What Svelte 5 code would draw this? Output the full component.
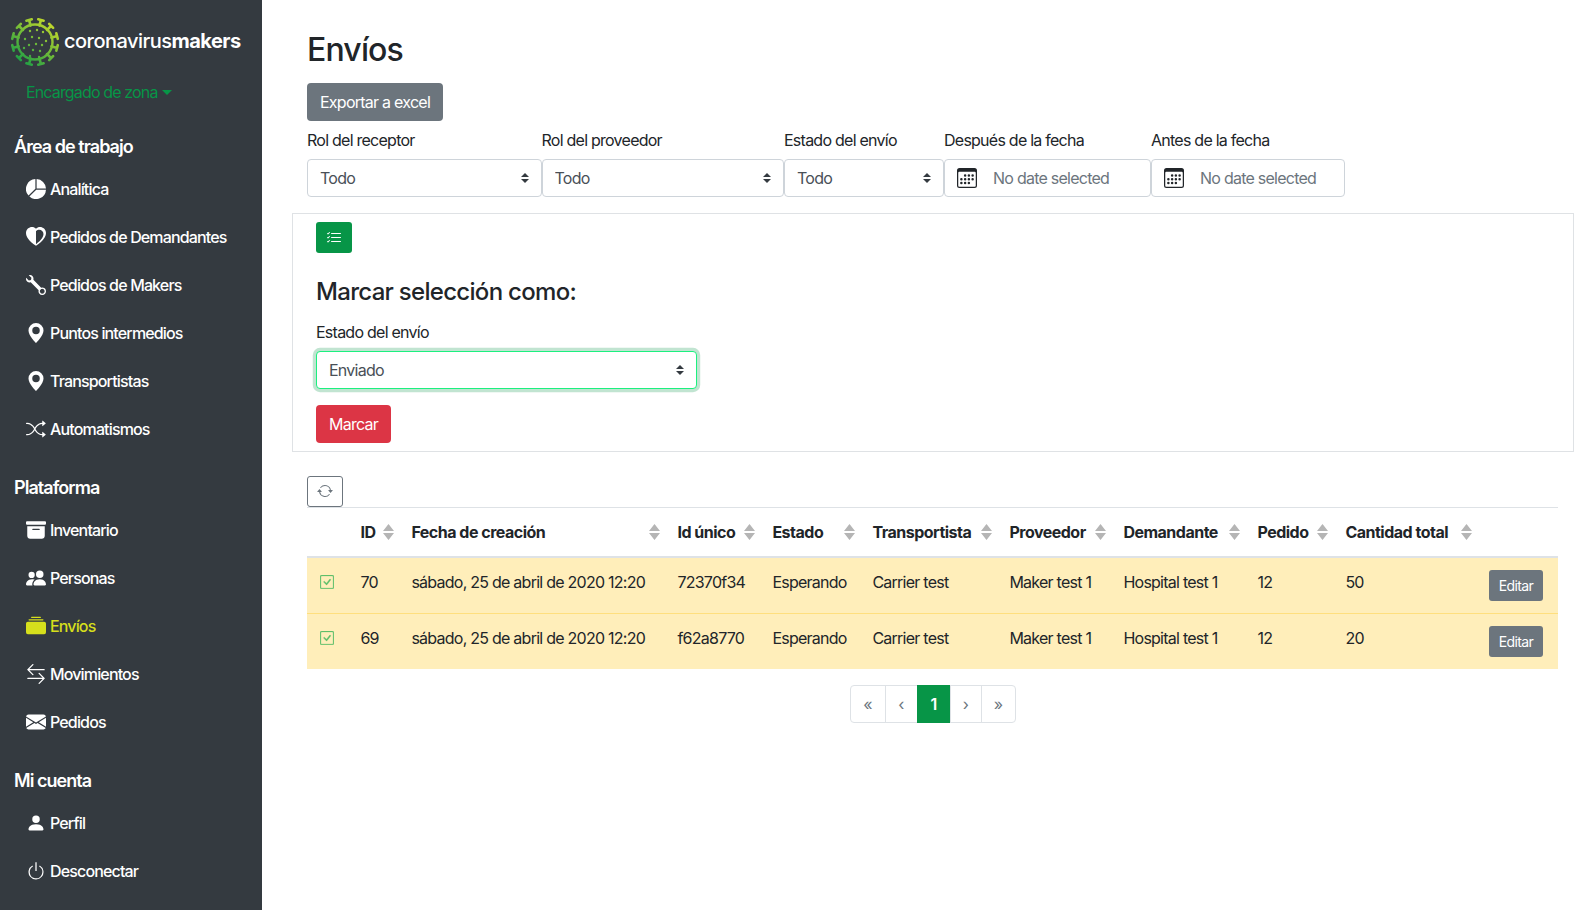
<script>
  const icons = {
    pie: 'M15.985 8.5H8.207l-5.5 5.5a8 8 0 0 0 13.277-5.5zM2 13.292A8 8 0 0 1 7.5.015v7.778l-5.5 5.5zM8.5.015V7.5h7.485A8.001 8.001 0 0 0 8.5.015z',
    heart: 'M8 1.314C3.562-3.248-7.534 4.736 8 15zM8 1.314C12.438-3.248 23.534 4.736 8 15zM8 3.300C11.500-0.400 19.500 5.500 8 13.700z',
    wrench: 'M.102 2.223A3.004 3.004 0 0 0 3.78 5.897l6.341 6.252A3.003 3.003 0 0 0 13 16a3 3 0 1 0-.851-5.878L5.897 3.781A3.004 3.004 0 0 0 2.223.1l2.141 2.142L4 4l-1.757.364L.102 2.223zm13.37 9.019.528.026.287.445.445.287.026.529L15 13l-.242.471-.026.529-.445.287-.287.445-.529.026L13 15l-.471-.242-.529-.026-.287-.445-.445-.287-.026-.529L11 13l.242-.471.026-.529.445-.287.287-.445.529-.026L13 11l.471.242z',
    geo: 'M8 16s6-5.686 6-10A6 6 0 0 0 2 6c0 4.314 6 10 6 10zm0-7a3 3 0 1 1 0-6 3 3 0 0 1 0 6z',
    shuffle: 'M0 3.5A.5.5 0 0 1 .5 3H1c2.202 0 3.827 1.24 4.874 2.418.49.552.865 1.102 1.126 1.532.26-.43.636-.98 1.126-1.532C9.173 4.24 10.798 3 13 3v1c-1.798 0-3.173 1.01-4.126 2.082A9.624 9.624 0 0 0 7.556 8a9.624 9.624 0 0 0 1.317 1.918C9.828 10.99 11.204 12 13 12v1c-2.202 0-3.827-1.24-4.874-2.418A10.595 10.595 0 0 1 7 9.05c-.26.43-.636.98-1.126 1.532C4.827 11.76 3.202 13 1 13H.5a.5.5 0 0 1 0-1H1c1.798 0 3.173-1.01 4.126-2.082A9.624 9.624 0 0 0 6.444 8a9.624 9.624 0 0 0-1.317-1.918C4.172 5.01 2.796 4 1 4H.5a.5.5 0 0 1-.5-.5zM13 5.466V1.534a.25.25 0 0 1 .41-.192l2.36 1.966c.12.1.12.284 0 .384l-2.36 1.966a.25.25 0 0 1-.41-.192zm0 9v-3.932a.25.25 0 0 1 .41-.192l2.36 1.966c.12.1.12.284 0 .384l-2.36 1.966a.25.25 0 0 1-.41-.192z',
    archive: 'M12.643 15C13.979 15 15 13.845 15 12.5V5H1v7.5C1 13.845 2.021 15 3.357 15h9.286zM5.500 7h5a.5.5 0 0 1 0 1h-5a.5.5 0 0 1 0-1zM.8 1a.8.8 0 0 0-.8.8V3a.8.8 0 0 0 .8.8h14.4A.8.8 0 0 0 16 3V1.800a.8.8 0 0 0-.8-.8H.8z',
    people: 'M7 14s-1 0-1-1 1-4 5-4 5 3 5 4-1 1-1 1H7zm4-6a3 3 0 1 0 0-6 3 3 0 0 0 0 6zM5.216 14A2.238 2.238 0 0 1 5 13c0-1.355.68-2.75 1.936-3.72A6.325 6.325 0 0 0 5 9c-4 0-5 3-5 4s1 1 1 1h4.216zM4.500 8a2.500 2.500 0 1 0 0-5 2.500 2.500 0 0 0 0 5z',
    collection: 'M0 13a1.500 1.500 0 0 0 1.500 1.500h13A1.500 1.500 0 0 0 16 13V6a1.500 1.500 0 0 0-1.500-1.500h-13A1.500 1.500 0 0 0 0 6v7zM2 3a.5.5 0 0 0 .5.5h11a.5.5 0 0 0 0-1h-11A.5.5 0 0 0 2 3zm2-2a.5.5 0 0 0 .5.5h7a.5.5 0 0 0 0-1h-7A.5.5 0 0 0 4 1z',
    arrows: 'M1 11.500a.5.5 0 0 0 .5.5h11.793l-3.147 3.146a.5.5 0 0 0 .708.708l4-4a.5.5 0 0 0 0-.708l-4-4a.5.5 0 0 0-.708.708L13.293 11H1.500a.5.5 0 0 0-.5.5zm14-7a.5.5 0 0 1-.5.5H2.707l3.147 3.146a.5.5 0 1 1-.708.708l-4-4a.5.5 0 0 1 0-.708l4-4a.5.5 0 1 1 .708.708L2.707 4H14.500a.5.5 0 0 1 .5.5z',
    envelope: 'M.05 3.555A2 2 0 0 1 2 2h12a2 2 0 0 1 1.950 1.555L8 8.414.05 3.555zM0 4.697v7.104l5.803-3.558L0 4.697zM6.761 8.830l-6.570 4.027A2 2 0 0 0 2 14h12a2 2 0 0 0 1.808-1.144l-6.570-4.027L8 9.586l-1.239-.757zm3.436-.586L16 11.801V4.697l-5.803 3.546z',
    person: 'M3 14s-1 0-1-1 1-4 6-4 6 3 6 4-1 1-1 1H3zm5-6a3 3 0 1 0 0-6 3 3 0 0 0 0 6z',
    power: 'M7.500 1v7h1V1h-1zM3 8.812a4.999 4.999 0 0 1 2.578-4.375l-.485-.874A6 6 0 1 0 11 3.616l-.501.865A5 5 0 1 1 3 8.812z',
    calendar: 'M14 0H2a2 2 0 0 0-2 2v12a2 2 0 0 0 2 2h12a2 2 0 0 0 2-2V2a2 2 0 0 0-2-2zM1 3.857C1 3.384 1.448 3 2 3h12c.552 0 1 .384 1 .857v10.286c0 .473-.448.857-1 .857H2c-.552 0-1-.384-1-.857V3.857zM6.500 7a1 1 0 1 0 0-2 1 1 0 0 0 0 2zm3 0a1 1 0 1 0 0-2 1 1 0 0 0 0 2zm3 0a1 1 0 1 0 0-2 1 1 0 0 0 0 2zm-9 3a1 1 0 1 0 0-2 1 1 0 0 0 0 2zm3 0a1 1 0 1 0 0-2 1 1 0 0 0 0 2zm3 0a1 1 0 1 0 0-2 1 1 0 0 0 0 2zm3 0a1 1 0 1 0 0-2 1 1 0 0 0 0 2zm-9 3a1 1 0 1 0 0-2 1 1 0 0 0 0 2zm3 0a1 1 0 1 0 0-2 1 1 0 0 0 0 2zm3 0a1 1 0 1 0 0-2 1 1 0 0 0 0 2z',
    listCheck: 'M5 11.500a.5.5 0 0 1 .5-.5h9a.5.5 0 0 1 0 1h-9a.5.5 0 0 1-.5-.5zm0-4a.5.5 0 0 1 .5-.5h9a.5.5 0 0 1 0 1h-9a.5.5 0 0 1-.5-.5zm0-4a.5.5 0 0 1 .5-.5h9a.5.5 0 0 1 0 1h-9a.5.5 0 0 1-.5-.5zM3.854 2.146a.5.5 0 0 1 0 .708l-1.500 1.500a.5.5 0 0 1-.708 0l-.5-.5a.5.5 0 1 1 .708-.708L2 3.293l1.146-1.147a.5.5 0 0 1 .708 0zm0 4a.5.5 0 0 1 0 .708l-1.500 1.500a.5.5 0 0 1-.708 0l-.5-.5a.5.5 0 1 1 .708-.708L2 7.293l1.146-1.147a.5.5 0 0 1 .708 0zm0 4a.5.5 0 0 1 0 .708l-1.500 1.500a.5.5 0 0 1-.708 0l-.5-.5a.5.5 0 0 1 .708-.708l.146.147 1.146-1.147a.5.5 0 0 1 .708 0z',
    repeat: 'M11.534 7h3.932a.25.25 0 0 1 .192.41l-1.966 2.360a.25.25 0 0 1-.384 0l-1.966-2.360a.25.25 0 0 1 .192-.41zm-11 2h3.932a.25.25 0 0 0 .192-.41L2.692 6.230a.25.25 0 0 0-.384 0L.342 8.590A.25.25 0 0 0 .534 9zM8 3c-1.552 0-2.940.707-3.857 1.818a.5.5 0 1 1-.771-.636A6.002 6.002 0 0 1 13.917 7H12.900A5.002 5.002 0 0 0 8 3zM3.100 9a5.002 5.002 0 0 0 8.757 2.182.5.5 0 1 1 .771.636A6.002 6.002 0 0 1 2.083 9H3.100z',
    check: 'M14 1a1 1 0 0 1 1 1v12a1 1 0 0 1-1 1H2a1 1 0 0 1-1-1V2a1 1 0 0 1 1-1h12zM2 0a2 2 0 0 0-2 2v12a2 2 0 0 0 2 2h12a2 2 0 0 0 2-2V2a2 2 0 0 0-2-2H2zM10.970 4.970a.75.75 0 0 1 1.071 1.050l-3.992 4.990a.75.75 0 0 1-1.080.02L4.324 8.384a.75.75 0 1 1 1.060-1.060l2.094 2.093 3.473-4.425a.235.235 0 0 1 .02-.022z'
  };

  const groups = [
    { title: 'Área de trabajo', items: [
      ['pie', 'Analítica'], ['heart', 'Pedidos de Demandantes'], ['wrench', 'Pedidos de Makers'],
      ['geo', 'Puntos intermedios'], ['geo', 'Transportistas'], ['shuffle', 'Automatismos']
    ]},
    { title: 'Plataforma', items: [
      ['archive', 'Inventario'], ['people', 'Personas'], ['collection', 'Envíos', true],
      ['arrows', 'Movimientos'], ['envelope', 'Pedidos']
    ]},
    { title: 'Mi cuenta', items: [['person', 'Perfil'], ['power', 'Desconectar']] }
  ];

  const filters = [
    { label: 'Rol del receptor', value: 'Todo', w: 'w1' },
    { label: 'Rol del proveedor', value: 'Todo', w: 'w2' },
    { label: 'Estado del envío', value: 'Todo', w: 'w3' },
    { label: 'Después de la fecha', date: true, w: 'w4' },
    { label: 'Antes de la fecha', date: true, w: 'w5' }
  ];

  const cols = [
    ['ID', 'c-id'], ['Fecha de creación', 'c-fecha'], ['Id único', 'c-uid'], ['Estado', 'c-est'],
    ['Transportista', 'c-tra'], ['Proveedor', 'c-pro'], ['Demandante', 'c-dem'], ['Pedido', 'c-ped'], ['Cantidad total', 'c-can']
  ];

  const rows = [
    ['70', 'sábado, 25 de abril de 2020 12:20', '72370f34', 'Esperando', 'Carrier test', 'Maker test 1', 'Hospital test 1', '12', '50'],
    ['69', 'sábado, 25 de abril de 2020 12:20', 'f62a8770', 'Esperando', 'Carrier test', 'Maker test 1', 'Hospital test 1', '12', '20']
  ];

  const pt = (r, a) => {
    const t = (a * Math.PI) / 180;
    return [25 + r * Math.sin(t), 25 - r * Math.cos(t)];
  };
  const spikePaths = Array.from({ length: 12 }, (_, i) => {
    const a = i * 30 + 15;
    const s = pt(17, a);
    const e = pt(22.4, a);
    const l = pt(23, a - 7);
    const r = pt(23, a + 7);
    return `M${s[0].toFixed(2)} ${s[1].toFixed(2)}L${e[0].toFixed(2)} ${e[1].toFixed(2)}M${l[0].toFixed(2)} ${l[1].toFixed(2)}L${r[0].toFixed(2)} ${r[1].toFixed(2)}`;
  }).join('');
  const dots = [[20,14],[27,13],[33,15],[15,22],[22,20],[29,21],[36,24],[19,28],[26,27],[32,28],[14,31],[23,33],[30,34],[20,39],[29,40]];
</script>

{#snippet icon(name, cls = '')}
  <svg class="bi {cls}" viewBox="0 0 16 16" fill="currentColor" aria-hidden="true"><path fill-rule="evenodd" d={icons[name]} /></svg>
{/snippet}

<div class="layout">
  <aside class="sidebar">
    <div class="brand">
      <svg class="logo" viewBox="0 0 50 50" aria-hidden="true">
        <defs>
          <linearGradient id="g" gradientUnits="userSpaceOnUse" x1="42" y1="5" x2="12" y2="46">
            <stop offset="0" stop-color="#c6d92b" />
            <stop offset="1" stop-color="#1f9f45" />
          </linearGradient>
        </defs>
        <circle cx="25" cy="25" r="17.500" fill="none" stroke="url(#g)" stroke-width="2.400" />
        <path d={spikePaths} fill="none" stroke="url(#g)" stroke-width="2.600" stroke-linecap="round" />
        {#each dots as d}
          <circle cx={d[0]} cy={d[1]} r="1.200" fill="url(#g)" />
        {/each}
      </svg>
      <span class="brand-text">coronavirus<b>makers</b></span>
    </div>
    <div class="role">Encargado de zona<i class="caret"></i></div>

    {#each groups as g, gi}
      <h6 class="group-title g{gi}">{g.title}</h6>
      <ul class="menu m{gi}">
        {#each g.items as it}
          <li class="item" class:active={it[2]}>
            <span class="ico">{@render icon(it[0])}</span>
            <span>{it[1]}</span>
          </li>
        {/each}
      </ul>
    {/each}
  </aside>

  <main class="main">
    <h2 class="title">Envíos</h2>
    <button class="btn secondary">Exportar a excel</button>

    <div class="filters">
      {#each filters as f}
        <div class="filter {f.w}">
          <div class="lbl">{f.label}</div>
          {#if f.date}
            <div class="date">
              {@render icon('calendar', 'cal')}
              <span>No date selected</span>
            </div>
          {:else}
            <select class="select"><option>{f.value}</option></select>
          {/if}
        </div>
      {/each}
    </div>

    <section class="card">
      <button class="btn-sm green">{@render icon('listCheck')}</button>
      <h4 class="card-title">Marcar selección como:</h4>
      <div class="lbl">Estado del envío</div>
      <select class="select focused"><option>Enviado</option></select>
      <button class="btn danger">Marcar</button>
    </section>

    <button class="btn-sm outline">{@render icon('repeat')}</button>

    <table class="table">
      <thead>
        <tr>
          <th class="c-chk"></th>
          {#each cols as c}
            <th class={c[1]}>
              <span class="th-in">
                <span>{c[0]}</span>
                <svg class="sort" viewBox="0 0 11 16" aria-hidden="true"><path d="M5.500 0 11 7H0zM5.500 16 0 9h11z" /></svg>
              </span>
            </th>
          {/each}
          <th class="c-act"></th>
        </tr>
      </thead>
      <tbody>
        {#each rows as r}
          <tr>
            <td class="chk">{@render icon('check')}</td>
            {#each r as v}
              <td>{v}</td>
            {/each}
            <td class="act"><button class="btn-edit">Editar</button></td>
          </tr>
        {/each}
      </tbody>
    </table>

    <nav class="pager">
      <span class="pg p1">«</span>
      <span class="pg p2">‹</span>
      <span class="pg p3">1</span>
      <span class="pg p4">›</span>
      <span class="pg p5">»</span>
    </nav>
  </main>
</div>

<style>
  :global(body) {
    margin: 0;
    background: #fff;
    color: #212529;
    font-family: Inter, "Liberation Sans", sans-serif;
    font-size: 16px;
    line-height: 1.5;
    letter-spacing: -0.75px;
  }
  .layout { display: flex; height: 910px; overflow: hidden; }

  .sidebar {
    width: 262px;
    flex: none;
    background: #343a40;
    color: #fff;
    box-sizing: border-box;
    padding: 17px 0 0 14px;
    letter-spacing: -0.85px;
  }
  .brand { display: flex; align-items: center; height: 50px; margin-left: -4px; }
  .logo { width: 50px; height: 50px; flex: none; }
  .brand-text { font-size: 20px; line-height: 1; margin: 0 0 2px 4px; letter-spacing: -0.52px; font-weight: 500; }
  .brand-text b { font-weight: 700; }
  .role { color: #079547; margin: 13px 0 0 12px; height: 24px; line-height: 24px; }
  .caret {
    display: inline-block;
    margin-left: 4px;
    vertical-align: 3px;
    border-top: 5px solid #079547;
    border-left: 5px solid transparent;
    border-right: 5px solid transparent;
  }
  .group-title { margin: 21px 0 0; font-size: 18px; line-height: 27px; font-weight: 600; letter-spacing: -0.95px; }
  .g0 { margin-top: 28.500px; }
  .menu { list-style: none; margin: 4.500px 0 0; padding: 0 0 0 12px; }
  .m0, .m2 { margin-top: 5.500px; }
  .item { display: flex; align-items: center; height: 48px; font-weight: 500; }
  .item.active { color: #d6df1c; }
  .ico { width: 24px; display: flex; flex: none; }
  .bi { width: 20px; height: 20px; display: block; }

  .main {
    flex: 1;
    min-width: 0;
    padding: 31px 19px 0 45px;
  }
  .title { margin: 0 0 13.600px; font-size: 32px; line-height: 38.400px; font-weight: 500; letter-spacing: -0.85px; }
  .btn {
    display: block;
    height: 38px;
    padding: 0 13px;
    border: 0;
    border-radius: 4px;
    color: #fff;
    font: inherit;
    letter-spacing: inherit;
    white-space: nowrap;
  }
  .secondary { background: #6c757d; }
  .danger { background: #dc3545; margin-top: 16px; }

  .filters { display: flex; margin-top: 7px; }
  .w1 { width: 234.500px; }
  .w2 { width: 242.500px; }
  .w3 { width: 160px; }
  .w4 { width: 207px; }
  .w5 { width: 194px; }
  .lbl { height: 24px; margin-bottom: 7px; }
  .select {
    display: block;
    width: 100%;
    height: 38px;
    box-sizing: border-box;
    padding: 0 28px 0 12px;
    border: 1px solid #ced4da;
    border-radius: 4px;
    color: #495057;
    font: inherit;
    letter-spacing: inherit;
    appearance: none;
    background: #fff url("data:image/svg+xml,%3csvg xmlns='http://www.w3.org/2000/svg' width='4' height='5' viewBox='0 0 4 5'%3e%3cpath fill='%23343a40' d='M2 0L0 2h4zm0 5L0 3h4z'/%3e%3c/svg%3e") no-repeat right 12px center / 8px 10px;
  }
  .date {
    display: flex;
    align-items: center;
    height: 38px;
    box-sizing: border-box;
    padding-left: 12px;
    border: 1px solid #ced4da;
    border-radius: 4px;
    color: #6c757d;
  }
  .date :global(.cal) { color: #212529; margin-right: 16px; }

  .card {
    margin: 16px -16px 0 -15px;
    padding: 8px 23px;
    border: 1px solid #dfe2e5;
  }
  .btn-sm {
    display: flex;
    align-items: center;
    justify-content: center;
    width: 36px;
    height: 31px;
    padding: 0;
    border-radius: 3px;
  }
  .btn-sm :global(svg) { width: 16px; height: 16px; }
  .green { background: #079547; border: 0; color: #fff; }
  .outline { background: #fff; border: 1px solid #6c757d; color: #6c757d; margin-top: 24px; }
  .card-title { margin: 25px 0 13.200px; font-size: 24px; line-height: 28.800px; font-weight: 500; letter-spacing: -0.7px; }
  .focused {
    width: 381px;
    border-color: #1cf07f;
    box-shadow: 0 0 0 3.200px rgba(7, 149, 71, 0.25);
  }

  .table { width: 1251px; border-collapse: collapse; table-layout: fixed; }
  th, td { padding: 12px; text-align: left; vertical-align: top; border-top: 1px solid #dee2e6; height: 24px; white-space: nowrap; }
  thead th { border-bottom: 2px solid #dee2e6; font-weight: 700; font-size: 16px; padding: 12px; letter-spacing: -0.5px; }
  tbody td { background: #ffeeba; border-top-color: #ffdf7e; }
  tbody tr:first-child td { border-top: 0; }
  .c-chk { width: 17.400px; }
  .c-id { width: 27px; }
  .c-fecha { width: 242px; }
  .c-uid { width: 71px; }
  .c-est { width: 76px; }
  .c-tra { width: 113px; }
  .c-pro { width: 90px; }
  .c-dem { width: 110px; }
  .c-ped { width: 64px; }
  .c-can { width: 120px; }
  .th-in { display: flex; justify-content: space-between; align-items: center; margin-right: -6.600px; }
  .sort { width: 11px; height: 16px; fill: #b5b5b5; flex: none; }
  td.chk { color: #5fbf6b; padding: 0 0 0 13px; }
  .chk :global(svg) { width: 14px; height: 14px; margin-top: 17px; stroke: currentColor; stroke-width: 0.35; }
  td.act { padding: 12px 15px 12px 0; }
  .btn-edit {
    height: 31px;
    width: 54px;
    padding: 0;
    border: 0;
    border-radius: 3px;
    background: #6c757d;
    color: #fff;
    font: inherit;
    font-size: 14px;
    letter-spacing: -0.6px;
    display: block;
    margin-left: auto;
  }

  .pager { display: flex; justify-content: center; margin-top: 16px; }
  .pg {
    display: flex;
    align-items: center;
    justify-content: center;
    height: 38px;
    box-sizing: border-box;
    border: 1px solid #dee2e6;
    margin-left: -1px;
    color: #6c757d;
  }
  .p1 { width: 36px; border-radius: 4px 0 0 4px; margin-left: 0; }
  .p2 { width: 33px; }
  .p3 { width: 34px; background: #079547; border-color: #079547; color: #fff; font-weight: 600; }
  .p4 { width: 32px; }
  .p5 { width: 35px; border-radius: 0 4px 4px 0; }
</style>
